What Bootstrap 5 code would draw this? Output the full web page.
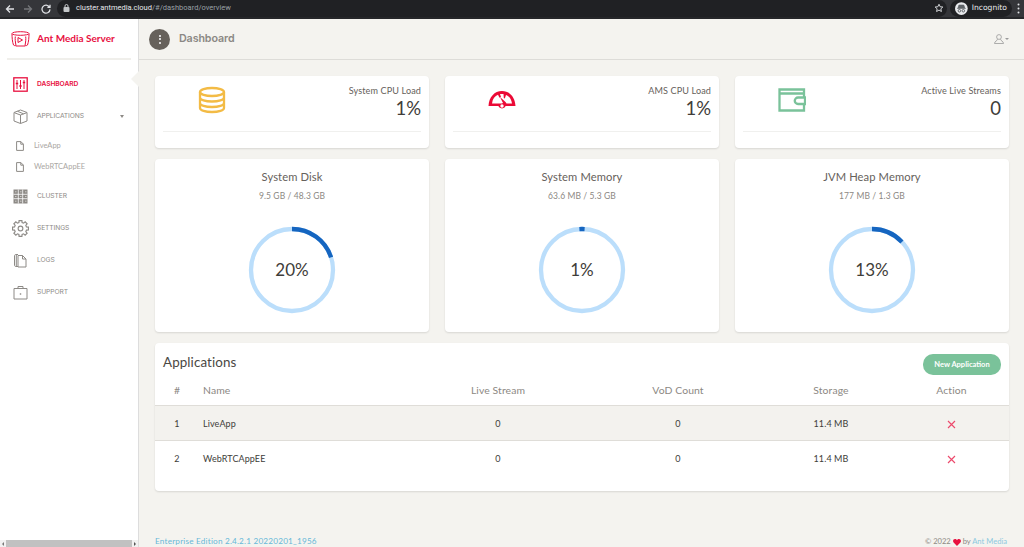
<!DOCTYPE html>
<html lang="en">
<head>
<meta charset="utf-8">
<title>Ant Media Server</title>
<link href="https://cdn.jsdelivr.net/npm/bootstrap@5.3.0/dist/css/bootstrap.min.css" rel="stylesheet">
<style>
html,body{height:547px;overflow:hidden}
body{font-family:"Lato","Liberation Sans",sans-serif;background:#f4f3ef;color:#403d39;width:1024px}
.shell{height:547px}
.chromebar{height:19px;background:#35363a;border-bottom:2px solid #26272a;color:#e8eaed;flex:none}
.chromebtns{width:57px;padding-left:5px;gap:8px}
.omni{background:#202124;height:17px;border-radius:9px;padding:0 3px 0 6px;font-family:"Roboto",sans-serif;font-size:7.5px;width:890px;margin-top:-1px}
.omni .dim{color:#9aa0a6}
.lockic{margin-right:6px}
.incog{background:#202124;height:17px;border-radius:9px;font-family:"DejaVu Sans",sans-serif;font-size:7.6px;padding:0 5px;margin:-1px 0 0 3px;width:62px}
.bodyrow{height:528px}
.side{width:139px;background:#fff;border-right:1px solid #ddd;flex:none;position:relative}
.brand{height:41px;margin:0 7px;border-bottom:2px solid #f0efeb;padding-left:4px;gap:7px;color:#e8103f;font-size:10px;font-weight:700}
.menu{padding-top:8px}
.mitem{height:32px;padding-left:13px;font-size:6.7px;color:#8d8a86;text-transform:uppercase;gap:9px;font-family:"Inter",sans-serif;letter-spacing:-.1px}
.mitem.on{color:#e8103f;font-weight:600}
.mitem svg{flex:none}
.gearic{margin:0 -1px}
.mcaret{width:0;height:0;border-left:2.5px solid transparent;border-right:2.5px solid transparent;border-top:3px solid #8d8a86;margin:0 14px 0 auto}
.subitem{height:21px;padding-left:16px;gap:10px;font-size:7.5px;color:#aaa7a3}
.subs{padding-top:5px;padding-bottom:3px;margin-top:-2px}
.pointer{position:absolute;right:-1px;top:52px;width:0;height:0;border-top:8px solid transparent;border-bottom:8px solid transparent;border-right:8px solid #f4f3ef}
.hscroll{height:7px;background:#f1f1f1;margin-top:auto;padding:0 2px;gap:2px}
.hthumb{background:#c1c1c1;height:7px;flex:1}
.arrowl{width:0;height:0;border-top:2px solid transparent;border-bottom:2px solid transparent;border-right:2px solid #777}
.arrowr{width:0;height:0;border-top:2px solid transparent;border-bottom:2px solid transparent;border-left:2px solid #555}
.mainpane{min-width:0}
.tophead{height:41px;border-bottom:1px solid #dddcd8;padding:0 15px 0 10px;flex:none}
.roundbtn{width:21px;height:21px;border-radius:50%;background:#66615b;gap:1.5px}
.roundbtn i{display:block;width:2px;height:2px;background:#fff;border-radius:50%}
.pagetitle{font-size:10.7px;font-weight:600;color:#8b8884;margin-left:9px;font-family:"Inter",sans-serif;letter-spacing:-.1px;padding-top:1px}
.usr{gap:1px}
.usrcaret{width:0;height:0;border-left:2px solid transparent;border-right:2px solid transparent;border-top:2px solid #9a9a9a}
.contentwrap{padding:16px 15px 0 16px}
.panel{background:#fff;border:0;border-radius:4px;box-shadow:0 1px 2px rgba(0,0,0,.12)}
.stat{height:72px;padding:0 8px}
.statrow{height:55px}
.staticon{width:63px;padding-bottom:7px}
.statlabel{font-size:9.1px;color:#66615b;line-height:11px;padding-top:9px;letter-spacing:.1px}
.statval{font-size:18.5px;line-height:22px;color:#403d39;padding-top:1px}
.statline{border-top:1px solid #f0f0ee}
.row.g-3>.gaugecol{margin-top:11px}
.gauge{height:173px;padding-top:10px}
.gtitle{font-size:11.2px;line-height:16px;color:#66615b;letter-spacing:.1px}
.gsub{font-size:8.5px;line-height:12px;color:#8c8883;margin-top:5px;letter-spacing:.1px}
.ring{position:relative;width:90px;height:90px;margin-top:23px}
.ringval{position:absolute;inset:0;font-size:17px;color:#403d39}
.appcard{height:148px;margin-top:11px}
.apphead{height:31px;padding:11px 8px 0 8px}
.apptitle{font-size:13.4px;line-height:16px;color:#4a4743;letter-spacing:.1px}
.newapp{background:#7ac29a;border:0;border-radius:10px;color:#fff;font-size:7.5px;font-weight:700;width:78px;height:21px;padding:0;line-height:21px}
.newapp:hover{background:#7ac29a;color:#fff}
.apptable{table-layout:fixed;width:854px;margin:0;font-size:9px;color:#403d39;letter-spacing:.1px}
.apptable th{font-weight:400;color:#8c8883;font-size:10.4px;height:31px;padding:3px 0 0;background:transparent;border-bottom:1px solid #dfddd8;vertical-align:middle;text-align:center}
.apptable td{height:35px;padding:2px 0 0;vertical-align:middle;text-align:center;border-bottom:1px solid #dfddd8;background:transparent}
.apptable tr:last-child td{border-bottom:0}
.apptable tr.shade td{background:#f3f2ee}
.apptable .cname{text-align:left;padding-left:4px}
.delx{display:inline-block;vertical-align:middle}
.delx path{stroke:#ec4a6c;stroke-width:1.15;fill:none}
.w1{width:44px}.w2{width:209px}.w3{width:180px}.w4{width:180px}.w5{width:126px}.w6{width:115px}
.pagefoot{margin-top:auto;height:13px;padding:0 17px 0 16px;font-size:8.2px;line-height:14px;color:#66615b}
.pagefoot .edition{color:#66b8d8;letter-spacing:.2px}
.pagefoot .copy{font-size:7.6px;color:#8c8883}
.pagefoot .copy span{color:#8cc9e0}
</style>
</head>
<body>
<div class="shell d-flex flex-column">
  <div class="chromebar d-flex align-items-center">
    <div class="chromebtns d-flex align-items-center">
      <svg width="10" height="10" viewBox="0 0 10 10" fill="none" stroke="#dfe1e5" stroke-width="1.3"><path d="M9 5H1.5M5 1.5 1.5 5 5 8.5"/></svg>
      <svg width="10" height="10" viewBox="0 0 10 10" fill="none" stroke="#75777b" stroke-width="1.3"><path d="M1 5h7.5M5 1.5 8.5 5 5 8.5"/></svg>
      <svg width="10" height="10" viewBox="0 0 10 10" fill="none" stroke="#dfe1e5" stroke-width="1.3"><path d="M8.4 3A4 4 0 1 0 9 5.4M9 .8V3.4H6.4"/></svg>
    </div>
    <div class="omni d-flex align-items-center">
      <svg class="lockic" width="7" height="8" viewBox="0 0 7 8" fill="#c4c7c9"><rect x=".5" y="3" width="6" height="5" rx="1"/><path d="M2 3V2a1.5 1.5 0 0 1 3 0v1" fill="none" stroke="#c4c7c9"/></svg>
      <span>cluster.antmedia.cloud<span class="dim">/#/dashboard/overview</span></span>
      <svg class="ms-auto" width="10" height="10" viewBox="0 0 24 24" fill="none" stroke="#dfe1e5" stroke-width="2.2"><path d="m12 3 2.8 6 6.4.7-4.8 4.3 1.4 6.4L12 17l-5.8 3.4L7.6 14 2.8 9.7 9.2 9z"/></svg>
    </div>
    <div class="incog d-flex align-items-center gap-1">
      <svg width="13" height="13" viewBox="0 0 13 13"><circle cx="6.5" cy="6.5" r="6.5" fill="#e8eaed"/><path d="M3 6h7L9 3H4zM2 6.5h9" stroke="#5f6368" fill="#5f6368" stroke-width=".7"/><circle cx="4.5" cy="8.8" r="1.3" fill="none" stroke="#5f6368"/><circle cx="8.5" cy="8.8" r="1.3" fill="none" stroke="#5f6368"/></svg>
      <span>Incognito</span>
    </div>
    <svg class="ms-auto me-1" width="3" height="11" viewBox="0 0 3 11" fill="#dfe1e5"><circle cx="1.5" cy="1.5" r="1"/><circle cx="1.5" cy="5.5" r="1"/><circle cx="1.5" cy="9.5" r="1"/></svg>
  </div>
  <div class="bodyrow d-flex">
    <aside class="side d-flex flex-column">
      <div class="brand d-flex align-items-center">
        <svg width="19" height="16" viewBox="0 0 19 16" fill="none" stroke="#e8103f" stroke-width="1"><ellipse cx="9.5" cy="2.5" rx="8.5" ry="1.8"/><path d="M1 3c0 3 .3 8 1.500 11 .2.600 2 .8 2.500.600C4.300 11 4 8 4.300 5.500M18 3c0 3-.3 8-1.500 11-.2.600-2 .8-2.500.600.700-3.600 1-6.600.7-9.100M5 15h9M7 6.500v5l4.500-2.500z"/></svg>
        <span>Ant Media Server</span>
      </div>
      <nav class="menu">
        <div class="mitem on d-flex align-items-center">
          <svg width="15" height="15" viewBox="0 0 15 15" fill="none" stroke="#e8103f"><rect x=".8" y=".8" width="13.4" height="13.4" stroke-width="1.3"/><path d="M4 3v9M7.500 3v9M11 3v9" stroke-width="1"/><path d="M2.800 6.500h2.400M6.300 9h2.400M9.800 5.500h2.400" stroke-width="1.6"/></svg>
          <span>Dashboard</span>
        </div>
        <div class="mitem d-flex align-items-center">
          <svg width="15" height="15" viewBox="0 0 15 15" fill="none" stroke="#8d8a86" stroke-width="1"><path d="M7.500 1 14 3.500V12l-6.500 2.500L1 12V3.500zM1.500 3.800 7.500 6l6-2.200M7.500 6v8.500M4.500 2.300 10.500 4.800"/></svg>
          <span>Applications</span>
          <i class="mcaret"></i>
        </div>
        <div class="subs">
          <div class="subitem d-flex align-items-center">
            <svg width="8" height="10" viewBox="0 0 8 10" fill="none" stroke="#8d8a86" stroke-width="1"><path d="M.6.600h4.300L7.400 3.100V9.400H.6zM4.800.600v2.600h2.600"/></svg>
            <span>LiveApp</span>
          </div>
          <div class="subitem d-flex align-items-center">
            <svg width="8" height="10" viewBox="0 0 8 10" fill="none" stroke="#8d8a86" stroke-width="1"><path d="M.6.600h4.300L7.400 3.100V9.400H.6zM4.800.600v2.600h2.600"/></svg>
            <span>WebRTCAppEE</span>
          </div>
        </div>
        <div class="mitem d-flex align-items-center">
          <svg width="15" height="15" viewBox="0 0 15 15"><rect x=".5" y=".5" width="14" height="14" fill="#8d8a86"/><path d="M5.300 .5v14M9.700 .5v14M.5 5.300h14M.5 9.700h14" stroke="#fff" stroke-width=".8"/><path d="M2 2.800h1.500M7 2.800h1.500M12 2.800h1.500M2 7.500h1.500M7 7.500h1.500M12 7.500h1.500M2 12.200h1.500M7 12.200h1.500M12 12.200h1.500" stroke="#cfcdca" stroke-width="1"/></svg>
          <span>Cluster</span>
        </div>
        <div class="mitem d-flex align-items-center">
          <svg class="gearic" width="17" height="17" viewBox="0 0 16 16" fill="none" stroke="#8d8a86" stroke-width="1.1"><g transform="translate(8 8)"><circle r="2.2"/><path d="M5.600-1.500 7.480-1.320V1.320L5.600 1.500 5.020 2.900 6.230 4.360 4.360 6.230 2.900 5.020 1.500 5.600 1.320 7.480H-1.320L-1.500 5.600-2.900 5.020-4.360 6.230-6.230 4.360-5.020 2.900-5.600 1.500-7.480 1.320V-1.320L-5.600-1.500-5.020-2.900-6.230-4.360-4.360-6.230-2.900-5.020-1.500-5.600-1.320-7.480H1.320L1.500-5.600 2.900-5.020 4.360-6.230 6.230-4.360 5.020-2.900z"/></g></svg>
          <span>Settings</span>
        </div>
        <div class="mitem d-flex align-items-center">
          <svg width="15" height="15" viewBox="0 0 15 15" fill="none" stroke="#8d8a86" stroke-width="1"><path d="M5 2.500h4.500L13 6v8H5zM9.500 2.500V6H13"/><path d="M5 1.500H3C2 1.500 1.500 2 1.500 3v9c0 1 .5 1.500 1.500 1.500h2M3.300 2v11"/></svg>
          <span>Logs</span>
        </div>
        <div class="mitem d-flex align-items-center">
          <svg width="15" height="15" viewBox="0 0 15 15" fill="none" stroke="#8d8a86" stroke-width="1"><path d="M1 3.500h13V14H1zM5 3.500V1.500h5v2"/><path d="M6.500 9h2M7.500 8v2" stroke-width=".6"/></svg>
          <span>Support</span>
        </div>
      </nav>
      <i class="pointer"></i>
      <div class="hscroll d-flex align-items-center">
        <i class="arrowl"></i><div class="hthumb"></div><i class="arrowr"></i>
      </div>
    </aside>
    <main class="mainpane flex-grow-1 d-flex flex-column">
      <header class="tophead d-flex align-items-center">
        <div class="roundbtn d-flex flex-column align-items-center justify-content-center"><i></i><i></i><i></i></div>
        <div class="pagetitle">Dashboard</div>
        <div class="usr ms-auto d-flex align-items-center">
          <svg width="10" height="10" viewBox="0 0 10 10" fill="none" stroke="#9a9a9a" stroke-width=".8"><circle cx="5" cy="3" r="2.4"/><path d="M3.500 5.200C3.500 7 .5 7 .5 9.500h9C9.500 7 6.500 7 6.500 5.200"/></svg>
          <i class="usrcaret"></i>
        </div>
      </header>
      <div class="contentwrap">
        <div class="row g-3">
          <div class="col-4">
            <div class="panel stat">
              <div class="statrow d-flex">
                <div class="staticon d-flex justify-content-end align-items-center">
                  <svg width="28" height="28" viewBox="0 0 28 28" fill="none" stroke="#f3bb45" stroke-width="2.3"><ellipse cx="14" cy="6" rx="12" ry="4"/><path d="M2 6v16c0 2.300 5.400 4 12 4s12-1.700 12-4V6M2 11.500c0 2.300 5.400 4 12 4s12-1.700 12-4M2 17c0 2.300 5.400 4 12 4s12-1.700 12-4"/></svg>
                </div>
                <div class="flex-grow-1 text-end">
                  <div class="statlabel">System CPU Load</div>
                  <div class="statval">1%</div>
                </div>
              </div>
              <div class="statline"></div>
            </div>
          </div>
          <div class="col-4">
            <div class="panel stat">
              <div class="statrow d-flex">
                <div class="staticon d-flex justify-content-end align-items-center">
                  <svg width="28" height="28" viewBox="0 0 28 28"><path fill="#eb0a36" d="M14 5C6.500 5 1 11 .5 20h9.800a4 4 0 0 0 7.400 0h9.800C27 11 21.500 5 14 5z"/><path fill="#fff" d="M4 17.500C4.500 13 7 10 10 8.800l1.500 3 1.500-.7-1-3h3.500l.3 4 1 .3 1.200-3.500c3 1 5.500 4.300 6 8.600h-5.500l-1-1.500-5.500-5 3 6-1.500.5z"/><circle cx="14" cy="20" r="1.7" fill="#fff"/></svg>
                </div>
                <div class="flex-grow-1 text-end">
                  <div class="statlabel">AMS CPU Load</div>
                  <div class="statval">1%</div>
                </div>
              </div>
              <div class="statline"></div>
            </div>
          </div>
          <div class="col-4">
            <div class="panel stat">
              <div class="statrow d-flex">
                <div class="staticon d-flex justify-content-end align-items-center">
                  <svg width="28" height="24" viewBox="0 0 28 24" fill="none" stroke="#7ac29a" stroke-width="2.3"><path d="M26 9V1.500H1.500v21H26V17M1.500 5.500H26"/><path d="M27 9.500h-7a2.500 2.500 0 0 0 0 6.500h7z"/></svg>
                </div>
                <div class="flex-grow-1 text-end">
                  <div class="statlabel">Active Live Streams</div>
                  <div class="statval">0</div>
                </div>
              </div>
              <div class="statline"></div>
            </div>
          </div>

          <div class="col-4 gaugecol">
            <div class="panel gauge d-flex flex-column align-items-center">
              <div class="gtitle">System Disk</div>
              <div class="gsub">9.5 GB / 48.3 GB</div>
              <div class="ring">
                <svg width="90" height="90" viewBox="0 0 90 90" fill="none" stroke-width="4.3"><circle cx="45" cy="45" r="41" stroke="#bbdefb"/><circle cx="45" cy="45" r="41" stroke="#1565c0" stroke-dasharray="51.5 258" transform="rotate(-90 45 45)"/></svg>
                <div class="ringval d-flex align-items-center justify-content-center">20%</div>
              </div>
            </div>
          </div>
          <div class="col-4 gaugecol">
            <div class="panel gauge d-flex flex-column align-items-center">
              <div class="gtitle">System Memory</div>
              <div class="gsub">63.6 MB / 5.3 GB</div>
              <div class="ring">
                <svg width="90" height="90" viewBox="0 0 90 90" fill="none" stroke-width="4.3"><circle cx="45" cy="45" r="41" stroke="#bbdefb"/><path stroke="#1565c0" d="M42.400 4.100a41 41 0 0 1 5.200 0"/></svg>
                <div class="ringval d-flex align-items-center justify-content-center">1%</div>
              </div>
            </div>
          </div>
          <div class="col-4 gaugecol">
            <div class="panel gauge d-flex flex-column align-items-center">
              <div class="gtitle">JVM Heap Memory</div>
              <div class="gsub">177 MB / 1.3 GB</div>
              <div class="ring">
                <svg width="90" height="90" viewBox="0 0 90 90" fill="none" stroke-width="4.3"><circle cx="45" cy="45" r="41" stroke="#bbdefb"/><circle cx="45" cy="45" r="41" stroke="#1565c0" stroke-dasharray="33.5 258" transform="rotate(-90 45 45)"/></svg>
                <div class="ringval d-flex align-items-center justify-content-center">13%</div>
              </div>
            </div>
          </div>
        </div>
        <section class="panel appcard">
          <div class="apphead d-flex justify-content-between align-items-start">
            <div class="apptitle">Applications</div>
            <button type="button" class="btn newapp">New Application</button>
          </div>
          <table class="table apptable">
            <thead>
              <tr><th class="w1">#</th><th class="w2 cname">Name</th><th class="w3">Live Stream</th><th class="w4">VoD Count</th><th class="w5">Storage</th><th class="w6">Action</th></tr>
            </thead>
            <tbody>
              <tr class="shade"><td>1</td><td class="cname">LiveApp</td><td>0</td><td>0</td><td>11.4 MB</td><td><svg class="delx" width="9" height="9" viewBox="0 0 9 9"><path d="M1 1l7 7M8 1 1 8"/></svg></td></tr>
              <tr><td>2</td><td class="cname">WebRTCAppEE</td><td>0</td><td>0</td><td>11.4 MB</td><td><svg class="delx" width="9" height="9" viewBox="0 0 9 9"><path d="M1 1l7 7M8 1 1 8"/></svg></td></tr>
            </tbody>
          </table>
        </section>
      </div>
      <footer class="pagefoot d-flex justify-content-between">
        <span class="edition">Enterprise Edition 2.4.2.1 20220201_1956</span>
        <span class="copy">© 2022 <svg width="8" height="7" viewBox="0 0 8 7" fill="#e8103f"><path d="M4 7 .6 3.500C-.6 2 .4 0 2 0c.9 0 1.600.5 2 1.200C4.400.5 5.100 0 6 0c1.600 0 2.600 2 1.400 3.500z"/></svg> by <span>Ant Media</span></span>
      </footer>
    </main>
  </div>
</div>
<script src="https://cdn.jsdelivr.net/npm/bootstrap@5.3.0/dist/js/bootstrap.bundle.min.js"></script>
</body>
</html>
